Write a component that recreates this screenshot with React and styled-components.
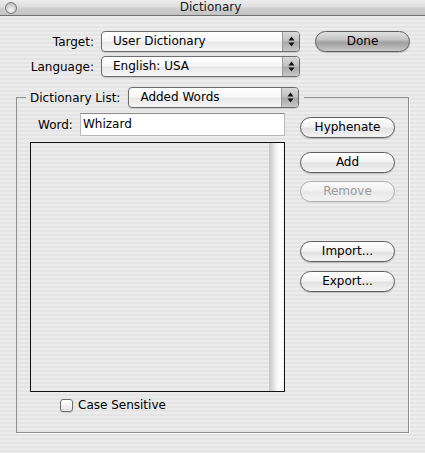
import React from 'react';
import styled, { createGlobalStyle } from 'styled-components';

const GlobalStyle = createGlobalStyle`
	html, body {
		margin: 0;
		padding: 0;
	}
	body {
		font-family: 'DejaVu Sans', 'Liberation Sans', sans-serif;
		font-size: 12px;
		color: #000;
	}
`;

const stripes = `repeating-linear-gradient(
	to bottom,
	#ececec 0px,
	#ececec 2px,
	#e4e4e4 2px,
	#e4e4e4 4px
)`;

const Arrows = () => (
	<svg width='7' height='11' viewBox='0 0 7 11'>
		<path d='M3.5 0.5 L6.5 4.5 L0.5 4.5 Z' fill='#111' />
		<path d='M0.5 6.5 L6.5 6.5 L3.5 10.5 Z' fill='#111' />
	</svg>
);

const Popup = ({ value, width }) => (
	<PopupBox style={{ width }}>
		<span>{value}</span>
		<PopupArrow>
			<Arrows />
		</PopupArrow>
	</PopupBox>
);

const App = () => {
	return (
		<Window>
			<GlobalStyle />
			<TitleBar>
				<CloseDot />
				<Title>Dictionary</Title>
			</TitleBar>

			<TopGrid>
				<Label>Target:</Label>
				<Popup value='User Dictionary' width={199} />
				<PillButton $default>Done</PillButton>
				<Label>Language:</Label>
				<Popup value='English: USA' width={199} />
			</TopGrid>

			<Group>
				<Legend>
					<span>Dictionary List:</span>
					<Popup value='Added Words' width={171} />
				</Legend>
				<GroupGrid>
					<LeftCol>
						<WordRow>
							<span>Word:</span>
							<WordField>Whizard</WordField>
						</WordRow>
						<ListBox>
							<ScrollTrack />
						</ListBox>
						<CheckRow>
							<CheckBox />
							<span>Case Sensitive</span>
						</CheckRow>
					</LeftCol>
					<RightCol>
						<PillButton $top={4}>Hyphenate</PillButton>
						<PillButton $top={14}>Add</PillButton>
						<PillButton $top={8} $disabled>Remove</PillButton>
						<PillButton $top={39}>Import...</PillButton>
						<PillButton $top={9}>Export...</PillButton>
					</RightCol>
				</GroupGrid>
			</Group>
		</Window>
	);
};

export default App;

const Window = styled.div`
	width: 425px;
	height: 453px;
	background: ${stripes};
	overflow: hidden;
	box-sizing: border-box;
`;

const TitleBar = styled.div`
	height: 15px;
	position: relative;
	display: flex;
	align-items: center;
	justify-content: center;
	background: linear-gradient(to bottom, #ececec 0%, #dedede 45%, #cfcfcf 55%, #c4c4c4 100%);
	border-bottom: 1px solid #6f6f6f;
`;

const CloseDot = styled.div`
	position: absolute;
	left: 5px;
	top: 2px;
	width: 10px;
	height: 10px;
	border-radius: 50%;
	border: 1px solid #7a7a7a;
	background: radial-gradient(circle at 50% 70%, #f4f4f4 0%, #d0d0d0 55%, #a8a8a8 100%);
`;

const Title = styled.div`
	font-size: 12px;
	color: #1a1a1a;
	line-height: 15px;
	margin-left: -4px;
`;

const TopGrid = styled.div`
	display: grid;
	grid-template-columns: 94px 199px 94px;
	grid-auto-rows: 21px;
	column-gap: 7px;
	row-gap: 4px;
	padding-top: 15px;
	align-items: center;

	& > button {
		margin-left: 8px;
	}
`;

const Label = styled.div`
	text-align: right;
	font-size: 12px;
`;

const PopupBox = styled.div`
	height: 21px;
	box-sizing: border-box;
	display: flex;
	align-items: stretch;
	border: 1px solid #6d6d6d;
	border-radius: 4px;
	background: linear-gradient(to bottom, #ffffff 0%, #f7f7f7 45%, #e8e8e8 55%, #f6f6f6 100%);
	box-shadow: 0 1px 1px rgba(0, 0, 0, 0.15);
	overflow: hidden;

	span {
		flex: 1;
		padding-left: 11px;
		line-height: 19px;
		font-size: 12px;
		white-space: nowrap;
	}
`;

const PopupArrow = styled.div`
	width: 16px;
	display: flex;
	align-items: center;
	justify-content: center;
	border-left: 1px solid #9a9a9a;
	background: linear-gradient(to bottom, #d8d8d8 0%, #c2c2c2 45%, #a9a9a9 55%, #c8c8c8 100%);
`;

const PillButton = styled.button`
	width: 95px;
	height: 21px;
	margin: ${(p) => p.$top || 0}px 0 0 0;
	padding: 0;
	box-sizing: border-box;
	border-radius: 11px;
	font-family: 'DejaVu Sans', 'Liberation Sans', sans-serif;
	font-size: 12px;
	line-height: 19px;
	color: ${(p) => (p.$disabled ? '#9a9a9a' : '#000')};
	border: 1px solid ${(p) => (p.$disabled ? '#b0b0b0' : '#5e5e5e')};
	background: ${(p) =>
		p.$default
			? 'linear-gradient(to bottom, #e2e2e2 0%, #c4c4c4 40%, #a0a0a0 55%, #b4b4b4 80%, #cacaca 100%)'
			: p.$disabled
			? 'linear-gradient(to bottom, #fafafa 0%, #f1f1f1 45%, #e8e8e8 55%, #f3f3f3 100%)'
			: 'linear-gradient(to bottom, #ffffff 0%, #f3f3f3 45%, #e2e2e2 55%, #f4f4f4 100%)'};
	box-shadow: 0 1px 1px rgba(0, 0, 0, ${(p) => (p.$disabled ? 0.05 : 0.2)});
	display: block;
`;

const Group = styled.fieldset`
	margin: 10px 16px 0 16px;
	padding: 5px 12px 20px 13px;
	border: 1px solid #8e8e8e;
	box-shadow: 1px 1px 0 #fafafa;
	min-width: 0;
`;

const Legend = styled.legend`
	display: flex;
	align-items: center;
	gap: 8px;
	margin-left: -4px;
	padding: 0 5px 0 4px;
	font-size: 12px;
`;

const GroupGrid = styled.div`
	display: grid;
	grid-template-columns: 255px 95px;
	column-gap: 15px;
`;

const LeftCol = styled.div`
	display: flex;
	flex-direction: column;
`;

const RightCol = styled.div`
	display: flex;
	flex-direction: column;
`;

const WordRow = styled.div`
	display: flex;
	align-items: center;
	gap: 7px;
	padding-left: 8px;
	height: 23px;
`;

const WordField = styled.div`
	width: 205px;
	height: 23px;
	box-sizing: border-box;
	background: #fff;
	border: 1px solid #b9b9b9;
	border-top-color: #8a8a8a;
	padding-left: 2px;
	line-height: 21px;
	font-size: 12px;
	margin-left: auto;
`;

const ListBox = styled.div`
	margin-top: 6px;
	height: 250px;
	box-sizing: border-box;
	border: 1px solid #111;
	display: flex;
	justify-content: flex-end;
`;

const ScrollTrack = styled.div`
	width: 15px;
	background: linear-gradient(to right, #c4c4c4 0%, #dcdcdc 25%, #f4f4f4 50%, #ffffff 75%, #f2f2f2 100%);
`;

const CheckRow = styled.div`
	display: flex;
	align-items: center;
	gap: 5px;
	margin-top: 6px;
	padding-left: 30px;
	height: 14px;
`;

const CheckBox = styled.div`
	width: 13px;
	height: 13px;
	box-sizing: border-box;
	border: 1px solid #707070;
	border-radius: 3px;
	background: linear-gradient(to bottom, #ffffff 0%, #f2f2f2 50%, #e2e2e2 100%);
	box-shadow: 0 1px 1px rgba(0, 0, 0, 0.15);
`;
